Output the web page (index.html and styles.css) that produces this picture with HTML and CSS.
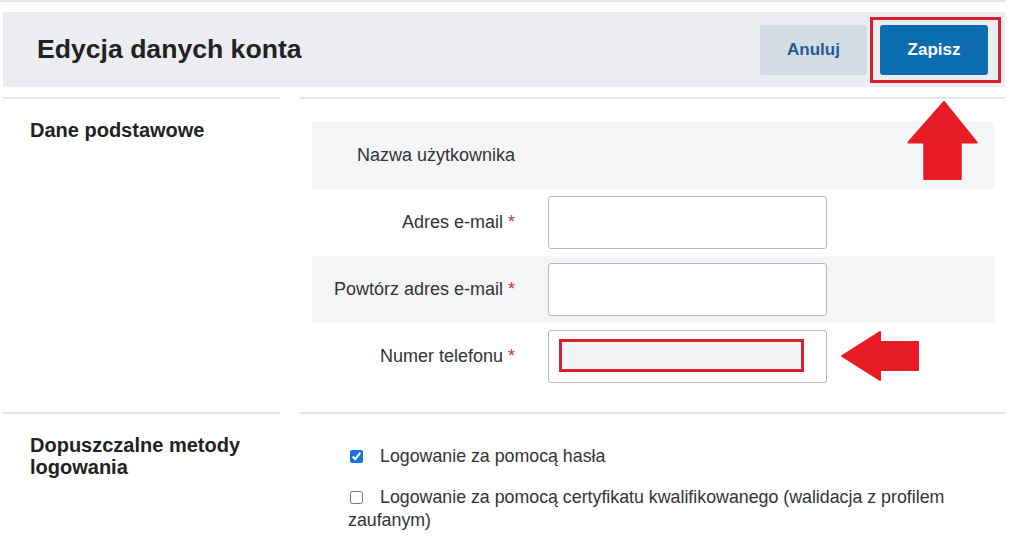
FILE: index.html
```html
<!DOCTYPE html>
<html lang="pl">
<head>
<meta charset="utf-8">
<title>Edycja danych konta</title>
<link rel="stylesheet" href="styles.css">
</head>
<body>
<div class="topline"></div>
<div class="page">
  <header class="header">
    <h1 class="title">Edycja danych konta</h1>
    <div class="actions">
      <button class="btn btn-cancel">Anuluj</button>
      <button class="btn btn-save">Zapisz</button>
    </div>
  </header>

  <section class="section">
    <div class="side"><h2 class="side-title">Dane podstawowe</h2></div>
    <div class="main main-form">
      <svg class="arrow-up" viewBox="0 0 71 80" aria-hidden="true"><polygon points="37,1 70,42 54,42 54,79 17,79 17,42 1,42" fill="#e81c24" stroke="#e81c24" stroke-width="2" stroke-linejoin="round"/></svg>
      <div class="row row-alt">
        <div class="label">Nazwa użytkownika</div>
      </div>
      <div class="row">
        <div class="label">Adres e-mail <span class="req">*</span></div>
        <div class="input"></div>
      </div>
      <div class="row row-alt">
        <div class="label">Powtórz adres e-mail <span class="req">*</span></div>
        <div class="input"></div>
      </div>
      <div class="row">
        <div class="label">Numer telefonu <span class="req">*</span></div>
        <div class="input input-phone"><span class="mark"></span></div>
        <svg class="arrow-left" viewBox="0 0 78 50" aria-hidden="true"><polygon points="1,25 39,1 39,11 77,11 77,39 39,39 39,49" fill="#e81c24" stroke="#e81c24" stroke-width="2" stroke-linejoin="round"/></svg>
      </div>
    </div>
  </section>

  <section class="section">
    <div class="side"><h2 class="side-title">Dopuszczalne metody logowania</h2></div>
    <div class="main main-checks">
      <p class="check"><input type="checkbox" checked>Logowanie za pomocą hasła</p>
      <p class="check"><input type="checkbox">Logowanie za pomocą certyfikatu kwalifikowanego (walidacja z profilem zaufanym)</p>
    </div>
  </section>
</div>
</body>
</html>
```

FILE: styles.css
```css
* { box-sizing: border-box; }

body {
  margin: 0;
  font-family: "Liberation Sans", Arial, sans-serif;
  color: #333;
  background: #fff;
}

.topline {
  width: 1005px;
  height: 2px;
  background: #e4e5e7;
}

.page {
  width: 1002px;
  margin-left: 3px;
}

.header {
  margin-top: 10px;
  height: 75px;
  background: #ebedf0;
  display: flex;
  align-items: center;
  justify-content: space-between;
  padding: 0 17px 0 34px;
}

.title {
  margin: 0;
  font-size: 26.6px;
  font-weight: bold;
  color: #222;
}

.actions {
  display: flex;
  gap: 13px;
}

.btn {
  height: 50px;
  border: 0;
  border-radius: 3px;
  font-family: inherit;
  font-size: 17px;
  font-weight: bold;
  padding: 0;
}

.btn-cancel {
  width: 107px;
  background: #d5dbe5;
  color: #1f5d96;
}

.btn-save {
  position: relative;
  width: 108px;
  background: #0b6cb0;
  color: #fff;
}

.btn-save::after {
  content: "";
  position: absolute;
  top: -8px;
  bottom: -8px;
  left: -10px;
  right: -13px;
  border: 3px solid #d8202f;
}

.section {
  display: grid;
  grid-template-columns: 277px 1fr;
  column-gap: 20px;
  margin-top: 10px;
}

.section + .section { margin-top: 0; }

.side, .main {
  border-top: 2px solid #e4e5e7;
}

.side { padding: 20px 20px 0 27px; }

.side-title {
  margin: 0;
  font-size: 20px;
  font-weight: bold;
  line-height: 22px;
  color: #222;
}

.main { position: relative; }

.main-form { padding: 23px 11px 22px 12px; }

.row {
  position: relative;
  height: 67px;
  display: flex;
  align-items: center;
}

.row-alt { background: #f4f5f7; }

.label {
  width: 203px;
  text-align: right;
  font-size: 18px;
  color: #333;
  margin-right: 33px;
  white-space: nowrap;
}

.req { color: #c8364a; }

.input {
  position: relative;
  width: 279px;
  height: 53px;
  background: #fff;
  border: 1.5px solid #b5b9c0;
  border-radius: 3px;
}

.mark {
  position: absolute;
  left: 10px;
  top: 8px;
  width: 245px;
  height: 33px;
  background: #f3f4f6;
  border: 3px solid #d8202f;
}

.arrow-left {
  position: absolute;
  left: 529px;
  top: 8px;
  width: 78px;
  height: 50px;
}

.arrow-up {
  position: absolute;
  left: 607px;
  top: 2px;
  width: 71px;
  height: 79px;
  z-index: 2;
}

.main-checks { padding: 31px 0 0 48px; }

.check {
  margin: 0 0 18px;
  font-size: 17.8px;
  line-height: 23px;
  color: #333;
}

.check input {
  width: 13px;
  height: 13px;
  margin: 0 17px 0 2px;
  vertical-align: -1px;
  accent-color: #1a6fdf;
}
```
